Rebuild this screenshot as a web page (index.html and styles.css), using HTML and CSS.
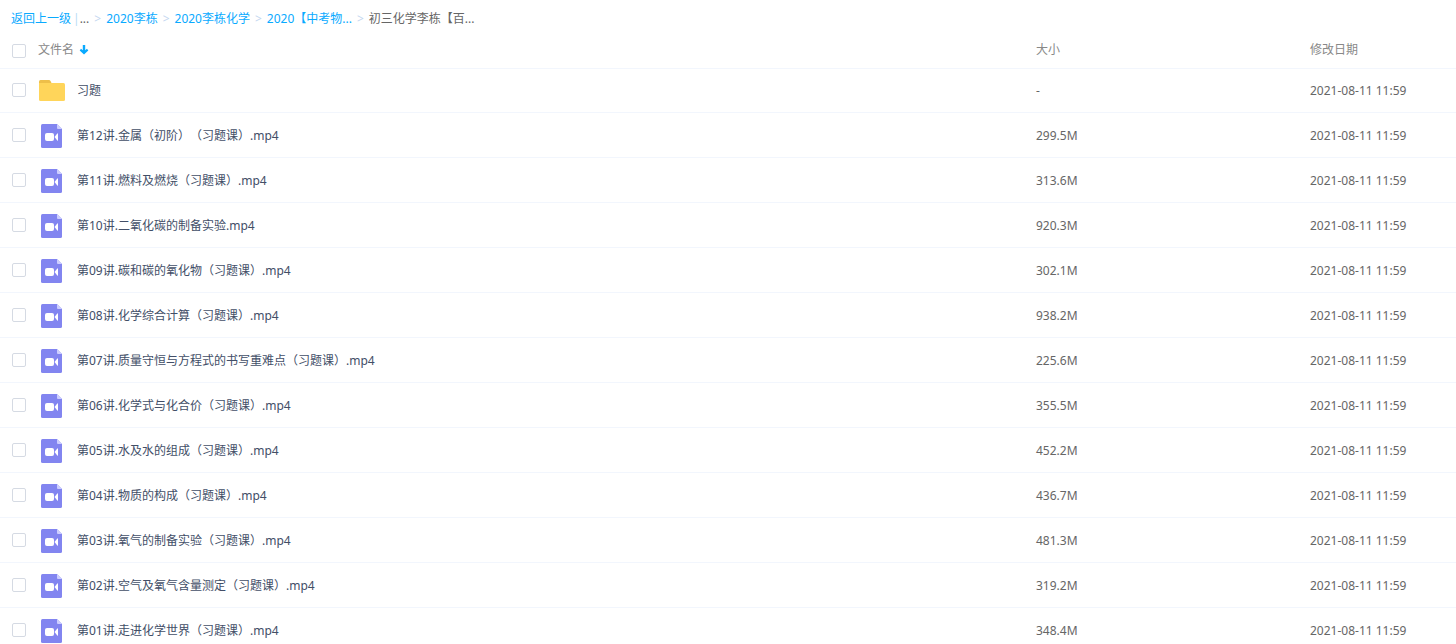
FILE: index.html
```html
<!DOCTYPE html>
<html lang="zh-CN">
<head>
<meta charset="utf-8">
<title>初三化学李栋</title>
<link rel="stylesheet" href="styles.css">
</head>
<body>
<svg class="sprite" aria-hidden="true">
  <symbol id="icon-folder" viewBox="0 0 26 21">
    <path fill="#eebf49" d="M0 5V1.500Q0 0 1.500 0H10q1 0 1.500 1l1.500 3v3H0z"/>
    <path fill="#ffd55a" d="M0 3h24.500Q26 3 26 4.500v15q0 1.500-1.500 1.500h-23Q0 21 0 19.500z"/>
  </symbol>
  <symbol id="icon-video" viewBox="0 0 21 24">
    <path fill="#8285f0" d="M1.500 0H16l5 5v17.500q0 1.500-1.500 1.500h-18Q0 24 0 22.500v-21Q0 0 1.500 0z"/>
    <path fill="#cdceff" d="M16 0l5 5h-4q-1 0-1-1z"/>
    <rect x="4" y="9" width="9" height="8" rx="2" fill="#fff"/>
    <path fill="#fff" d="M13.500 13L16.300 9.400q.7-.5.7.4v6.400q0 .9-.7.400z"/>
  </symbol>
</svg>
<nav class="breadcrumb" aria-label="路径">
  <a href="#">返回上一级</a><span class="bar">|</span><span class="more">...</span><span class="sep">&gt;</span><a href="#">2020李栋</a><span class="sep">&gt;</span><a href="#">2020李栋化学</a><span class="sep">&gt;</span><a href="#">2020【中考物...</a><span class="sep">&gt;</span><span class="current">初三化学李栋【百...</span>
</nav>
<table class="files">
  <colgroup><col><col class="col-size"><col class="col-date"></colgroup>
  <thead>
    <tr>
      <th scope="col"><div class="head-name"><input type="checkbox" class="check" aria-label="全选"><span>文件名</span><svg class="sort" viewBox="0 0 10 10" aria-hidden="true"><path d="M3.800 0h2.400v5.200l1.800-1.400 1.300 1.700L5 9.500.7 5.500 2 3.800l1.800 1.400z" fill="#09aaff"/></svg></div></th>
      <th scope="col">大小</th>
      <th scope="col">修改日期</th>
    </tr>
  </thead>
  <tbody>
    <tr class="folder-row"><td><label class="name"><input type="checkbox" class="check"><svg class="icon folder"><use href="#icon-folder"/></svg><span>习题</span></label></td><td>-</td><td>2021-08-11 11:59</td></tr>
    <tr><td><label class="name"><input type="checkbox" class="check"><svg class="icon video"><use href="#icon-video"/></svg><span>第12讲.金属（初阶）（习题课）.mp4</span></label></td><td>299.5M</td><td>2021-08-11 11:59</td></tr>
    <tr><td><label class="name"><input type="checkbox" class="check"><svg class="icon video"><use href="#icon-video"/></svg><span>第11讲.燃料及燃烧（习题课）.mp4</span></label></td><td>313.6M</td><td>2021-08-11 11:59</td></tr>
    <tr><td><label class="name"><input type="checkbox" class="check"><svg class="icon video"><use href="#icon-video"/></svg><span>第10讲.二氧化碳的制备实验.mp4</span></label></td><td>920.3M</td><td>2021-08-11 11:59</td></tr>
    <tr><td><label class="name"><input type="checkbox" class="check"><svg class="icon video"><use href="#icon-video"/></svg><span>第09讲.碳和碳的氧化物（习题课）.mp4</span></label></td><td>302.1M</td><td>2021-08-11 11:59</td></tr>
    <tr><td><label class="name"><input type="checkbox" class="check"><svg class="icon video"><use href="#icon-video"/></svg><span>第08讲.化学综合计算（习题课）.mp4</span></label></td><td>938.2M</td><td>2021-08-11 11:59</td></tr>
    <tr><td><label class="name"><input type="checkbox" class="check"><svg class="icon video"><use href="#icon-video"/></svg><span>第07讲.质量守恒与方程式的书写重难点（习题课）.mp4</span></label></td><td>225.6M</td><td>2021-08-11 11:59</td></tr>
    <tr><td><label class="name"><input type="checkbox" class="check"><svg class="icon video"><use href="#icon-video"/></svg><span>第06讲.化学式与化合价（习题课）.mp4</span></label></td><td>355.5M</td><td>2021-08-11 11:59</td></tr>
    <tr><td><label class="name"><input type="checkbox" class="check"><svg class="icon video"><use href="#icon-video"/></svg><span>第05讲.水及水的组成（习题课）.mp4</span></label></td><td>452.2M</td><td>2021-08-11 11:59</td></tr>
    <tr><td><label class="name"><input type="checkbox" class="check"><svg class="icon video"><use href="#icon-video"/></svg><span>第04讲.物质的构成（习题课）.mp4</span></label></td><td>436.7M</td><td>2021-08-11 11:59</td></tr>
    <tr><td><label class="name"><input type="checkbox" class="check"><svg class="icon video"><use href="#icon-video"/></svg><span>第03讲.氧气的制备实验（习题课）.mp4</span></label></td><td>481.3M</td><td>2021-08-11 11:59</td></tr>
    <tr><td><label class="name"><input type="checkbox" class="check"><svg class="icon video"><use href="#icon-video"/></svg><span>第02讲.空气及氧气含量测定（习题课）.mp4</span></label></td><td>319.2M</td><td>2021-08-11 11:59</td></tr>
    <tr><td><label class="name"><input type="checkbox" class="check"><svg class="icon video"><use href="#icon-video"/></svg><span>第01讲.走进化学世界（习题课）.mp4</span></label></td><td>348.4M</td><td>2021-08-11 11:59</td></tr>
  </tbody>
</table>
</body>
</html>
```

FILE: styles.css
```css
* {
  box-sizing: border-box;
}

body {
  margin: 0;
  height: 100vh;
  overflow: hidden;
  background: #fff;
  color: #666;
  font: 12px/18px "Noto Sans", "Noto Sans CJK SC", sans-serif;
  text-spacing-trim: space-all;
}

.sprite {
  display: none;
}

.breadcrumb {
  display: flex;
  align-items: center;
  height: 32px;
  padding: 6px 11px 0;
  white-space: nowrap;
}

.breadcrumb a {
  color: #09aaff;
  text-decoration: none;
}

.bar {
  padding-left: 2px;
  color: #b8dcf5;
}

.sep {
  padding: 0 5px;
  color: #c4d7f0;
}

.files {
  width: 100%;
  table-layout: fixed;
  border-collapse: separate;
  border-spacing: 0;
}

.col-size {
  width: 274px;
}

.col-date {
  width: 146px;
}

.files th,
.files td {
  height: 45px;
  padding: 2px 0 0;
  border-bottom: 1px solid #f2f6fd;
  text-align: left;
  vertical-align: middle;
}

.files th {
  height: 37px;
  padding: 0;
  color: #888;
  font-weight: 400;
}

.files .folder-row td {
  height: 44px;
  padding: 0;
}

.head-name,
.name {
  display: flex;
  align-items: center;
  padding-left: 12px;
}

.name {
  color: #424e67;
}

.check {
  appearance: none;
  flex: none;
  width: 14px;
  height: 14px;
  margin: 0 12px 2px 0;
  border: 1px solid #d5dae3;
  border-radius: 2px;
  background: #fff;
}

.head-name .check {
  margin: 2px 12px 0 0;
}

.sort {
  width: 10px;
  height: 10px;
  margin-left: 5px;
}

.icon {
  flex: none;
}

.folder {
  width: 26px;
  height: 21px;
  margin: 0 12px 0 1px;
}

.video {
  width: 21px;
  height: 24px;
  margin: 0 15px 0 3px;
}
```
